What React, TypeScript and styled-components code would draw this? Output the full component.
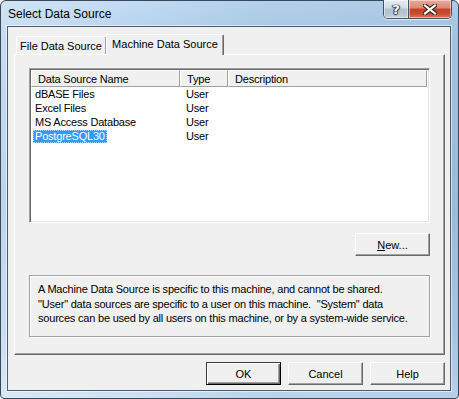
import { FC } from "react";
import styled, { createGlobalStyle } from "styled-components";

const GlobalStyle = createGlobalStyle`
  html, body {
    margin: 0;
    padding: 0;
    background: #ffffff;
  }
  * {
    box-sizing: border-box;
  }
`;

const font = `"Liberation Sans", Arial, sans-serif`;

const Window = styled.div`
  width: 459px;
  height: 399px;
  display: flex;
  flex-direction: column;
  padding: 0 7px 7px 6px;
  border: 1px solid #3a4959;
  border-radius: 6px 6px 4px 4px;
  background:
    linear-gradient(90deg, rgba(255, 255, 255, 0.25) 0%, rgba(255, 255, 255, 0) 30%,
      rgba(80, 130, 170, 0.12) 55%, rgba(80, 130, 170, 0.18) 100%),
    linear-gradient(180deg, #c2dbf3 0%, #b4d0ec 10%, #a9c7e5 50%, #b9d4ee 85%, #cde1f4 100%);
  font-family: ${font};
`;

const TitleBar = styled.div`
  height: 25px;
  display: flex;
  align-items: flex-start;
  justify-content: space-between;
`;

const Title = styled.div`
  margin-top: 6px;
  margin-left: 1px;
  font-size: 12px;
  color: #000;
`;

const CaptionButtons = styled.div`
  display: flex;
  margin-top: -1px;
  margin-right: -1px;
  height: 19px;
  border: 1px solid #46525f;
  border-top: none;
  border-radius: 0 0 5px 5px;
  overflow: hidden;
  box-shadow: 0 1px 0 rgba(255, 255, 255, 0.6);
`;

const CaptionButton = styled.div<{ close?: boolean }>`
  width: ${(p) => (p.close ? 43 : 24)}px;
  display: flex;
  align-items: center;
  justify-content: center;
  border-left: ${(p) => (p.close ? "1px solid #46525f" : "none")};
  background: ${(p) =>
    p.close
      ? "linear-gradient(180deg, #e9ab9c 0%, #dc8670 45%, #c4412a 50%, #c9492f 75%, #dd7a5d 100%)"
      : "linear-gradient(180deg, #e6edf4 0%, #d2dbe5 45%, #b3c0ce 50%, #b8c6d4 80%, #c9d5e1 100%)"};
  box-shadow: inset 0 0 0 1px rgba(255, 255, 255, 0.45);
  color: #fff;
  font-family: "DejaVu Sans", sans-serif;
  font-weight: bold;
  font-size: 13px;
  text-shadow: 0 0 1px #2a3440, 1px 0 1px #2a3440, -1px 0 1px #2a3440, 0 1px 1px #2a3440;
`;

const Client = styled.div`
  flex: 1;
  display: flex;
  flex-direction: column;
  padding: 7px 5px 5px 6px;
  border: 1px solid #4d5c6d;
  background: #f0f0f0;
  box-shadow: 0 0 0 1px rgba(255, 255, 255, 0.55);
  font-size: 11px;
  letter-spacing: -0.2px;
  color: #000;
`;

const TabStrip = styled.div`
  height: 20px;
  display: flex;
  align-items: flex-end;
  padding-left: 2px;
`;

const Tab = styled.div<{ active?: boolean }>`
  position: relative;
  z-index: ${(p) => (p.active ? 1 : 0)};
  width: ${(p) => (p.active ? 118 : 90)}px;
  height: ${(p) => (p.active ? 21 : 18)}px;
  margin-bottom: ${(p) => (p.active ? -1 : 0)}px;
  display: flex;
  align-items: center;
  justify-content: center;
  padding-bottom: ${(p) => (p.active ? 3 : 0)}px;
  background: #f0f0f0;
  border-top: 1px solid #ffffff;
  border-left: 1px solid #ffffff;
  border-right: 1px solid ${(p) => (p.active ? "#696969" : "#a0a0a0")};
  box-shadow: ${(p) => (p.active ? "inset -1px 0 0 #a0a0a0" : "none")};
  border-radius: 2px 2px 0 0;
  font-size: 11px;
  letter-spacing: 0;
  white-space: nowrap;
`;

const Panel = styled.div`
  height: 301px;
  display: flex;
  flex-direction: column;
  padding: 13px 0 0 14px;
  border-top: 1px solid #ffffff;
  border-left: 1px solid #ffffff;
  border-right: 1px solid #696969;
  border-bottom: 1px solid #696969;
  box-shadow: inset -1px -1px 0 #a0a0a0;
`;

const ListView = styled.div`
  width: 401px;
  height: 155px;
  display: flex;
  flex-direction: column;
  background: #ffffff;
  border-top: 1px solid #a0a0a0;
  border-left: 1px solid #a0a0a0;
  border-right: 1px solid #ffffff;
  border-bottom: 1px solid #ffffff;
  box-shadow: inset 1px 1px 0 #696969, inset -1px -1px 0 #e3e3e3;
  padding: 1px 2px 1px 1px;
`;

const Header = styled.div`
  display: grid;
  grid-template-columns: 149px 48px 199px;
  height: 17px;
  background: #f0f0f0;
`;

const HeaderCell = styled.div`
  display: flex;
  align-items: center;
  padding-left: 6px;
  padding-top: 1px;
  border-top: 1px solid #ffffff;
  border-left: 1px solid #ffffff;
  border-right: 1px solid #a0a0a0;
  border-bottom: 1px solid #a0a0a0;
  white-space: nowrap;
`;

const Row = styled.div`
  display: grid;
  grid-template-columns: 149px 48px 199px;
  height: 14px;
  align-items: center;
`;

const NameCell = styled.div`
  padding-left: 2px;
  white-space: nowrap;
`;

const NameText = styled.span<{ selected?: boolean }>`
  display: inline-block;
  height: 13px;
  line-height: 12px;
  padding: 0 2px;
  background: ${(p) => (p.selected ? "#3399ff" : "transparent")};
  color: ${(p) => (p.selected ? "#ffffff" : "#000000")};
  outline: ${(p) => (p.selected ? "1px dotted #a8d3ff" : "none")};
  outline-offset: -1px;
`;

const TypeCell = styled.div`
  padding-left: 6px;
`;

const ButtonBar = styled.div<{ top: number; gap?: number }>`
  display: flex;
  justify-content: flex-end;
  gap: ${(p) => p.gap ?? 0}px;
  margin-top: ${(p) => p.top}px;
`;

const Button = styled.div<{ primary?: boolean }>`
  width: 75px;
  height: 23px;
  display: flex;
  align-items: center;
  justify-content: center;
  background: #f0f0f0;
  font-size: 11px;
  letter-spacing: 0;
  border-top: 1px solid ${(p) => (p.primary ? "#3c3c3c" : "#ffffff")};
  border-left: 1px solid ${(p) => (p.primary ? "#3c3c3c" : "#ffffff")};
  border-right: 1px solid ${(p) => (p.primary ? "#000000" : "#696969")};
  border-bottom: 1px solid ${(p) => (p.primary ? "#000000" : "#696969")};
  box-shadow: ${(p) =>
    p.primary
      ? "inset 1px 1px 0 #ffffff, inset -1px -1px 0 #696969, inset -2px -2px 0 #a0a0a0"
      : "inset -1px -1px 0 #a0a0a0"};
`;

const NewButtonWrap = styled.div`
  width: 401px;
  display: flex;
  justify-content: flex-end;
  margin-top: 10px;
`;

const Underline = styled.span`
  text-decoration: underline;
`;

const InfoBox = styled.div`
  width: 401px;
  height: 62px;
  margin-top: 19px;
  padding: 6px 0 0 8px;
  border: 1px solid #a0a0a0;
  box-shadow: 1px 1px 0 #ffffff, inset 1px 1px 0 #ffffff;
  line-height: 14.5px;
  white-space: pre;
`;

const CloseGlyph: FC = () => (
  <svg width="14" height="11" viewBox="0 0 14 11">
    <path d="M2 1.5 L12 9.5 M12 1.5 L2 9.5" stroke="#3a2420" strokeWidth="4.4" strokeLinecap="square" />
    <path d="M2 1.5 L12 9.5 M12 1.5 L2 9.5" stroke="#ffffff" strokeWidth="2.2" strokeLinecap="square" />
  </svg>
);

const sources = [
  { name: "dBASE Files", type: "User" },
  { name: "Excel Files", type: "User" },
  { name: "MS Access Database", type: "User" },
  { name: "PostgreSQL30", type: "User" },
];

const App: FC = () => {
  const selected = 3;
  return (
    <>
      <GlobalStyle />
      <Window>
        <TitleBar>
          <Title>Select Data Source</Title>
          <CaptionButtons>
            <CaptionButton>?</CaptionButton>
            <CaptionButton close>
              <CloseGlyph />
            </CaptionButton>
          </CaptionButtons>
        </TitleBar>
        <Client>
          <TabStrip>
            <Tab>File Data Source</Tab>
            <Tab active>Machine Data Source</Tab>
          </TabStrip>
          <Panel>
            <ListView>
              <Header>
                <HeaderCell>Data Source Name</HeaderCell>
                <HeaderCell>Type</HeaderCell>
                <HeaderCell>Description</HeaderCell>
              </Header>
              {sources.map((s, idx) => (
                <Row key={s.name}>
                  <NameCell>
                    <NameText selected={idx === selected}>{s.name}</NameText>
                  </NameCell>
                  <TypeCell>{s.type}</TypeCell>
                  <div />
                </Row>
              ))}
            </ListView>
            <NewButtonWrap>
              <Button>
                <Underline>N</Underline>ew...
              </Button>
            </NewButtonWrap>
            <InfoBox>
              {"A Machine Data Source is specific to this machine, and cannot be shared.\n" +
                "\"User\" data sources are specific to a user on this machine.  \"System\" data\n" +
                "sources can be used by all users on this machine, or by a system-wide service."}
            </InfoBox>
          </Panel>
          <ButtonBar top={7} gap={7}>
            <Button primary>OK</Button>
            <Button>Cancel</Button>
            <Button>Help</Button>
          </ButtonBar>
        </Client>
      </Window>
    </>
  );
};

export default App;
